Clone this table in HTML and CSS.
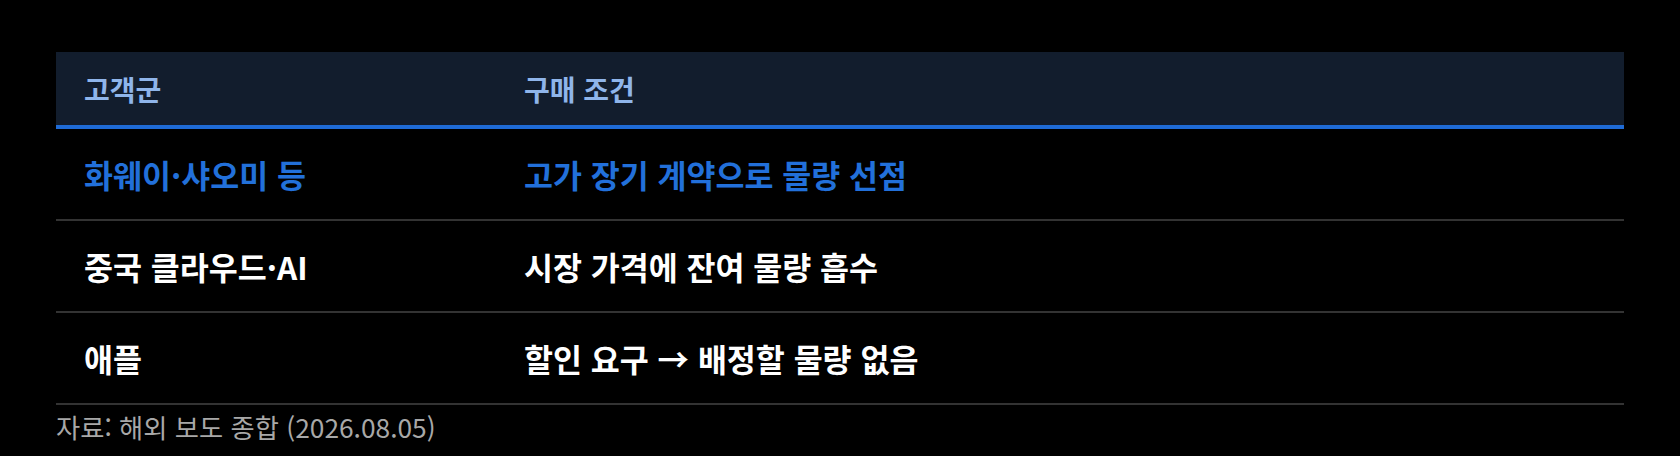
FILE: index.html
```html
<!DOCTYPE html>
<html lang="ko">
<head>
<meta charset="utf-8">
<title>고객군별 구매 조건</title>
<link rel="stylesheet" href="styles.css">
</head>
<body>
<div class="wrap">
  <div class="tbl">
    <div class="row head">
      <div class="cell c1">고객군</div>
      <div class="cell c2">구매 조건</div>
    </div>
    <div class="row hl">
      <div class="cell c1">화웨이·샤오미 등</div>
      <div class="cell c2">고가 장기 계약으로 물량 선점</div>
    </div>
    <div class="row">
      <div class="cell c1">중국 클라우드·AI</div>
      <div class="cell c2">시장 가격에 잔여 물량 흡수</div>
    </div>
    <div class="row">
      <div class="cell c1">애플</div>
      <div class="cell c2">할인 요구 → 배정할 물량 없음</div>
    </div>
  </div>
  <p class="src">자료: 해외 보도 종합 (2026.08.05)</p>
</div>
</body>
</html>
```

FILE: styles.css
```css
html, body {
  margin: 0;
  padding: 0;
  background: #000;
}
body {
  font-family: "Noto Sans CJK KR", "Noto Sans", sans-serif;
  color: #fff;
}
.wrap {
  padding: 52px 56px 0 56px;
}
.tbl {
  display: flex;
  flex-direction: column;
}
.row {
  display: grid;
  grid-template-columns: 440px 1fr;
  align-items: center;
  height: 92px;
  box-sizing: border-box;
  border-bottom: 2px solid #333333;
  font-size: 31.5px;
  font-weight: 700;
  color: #ffffff;
}
.row.head {
  height: 77px;
  background: #121d2d;
  border-bottom: 4px solid #1f6bd6;
  font-size: 28px;
  color: #8fb5ea;
}
.row.hl {
  color: #2270da;
}
.cell {
  padding-left: 28px;
  white-space: nowrap;
}
.src {
  margin: 4px 0 0 0;
  font-size: 26.3px;
  line-height: 36px;
  color: #a8a8a8;
}
```
